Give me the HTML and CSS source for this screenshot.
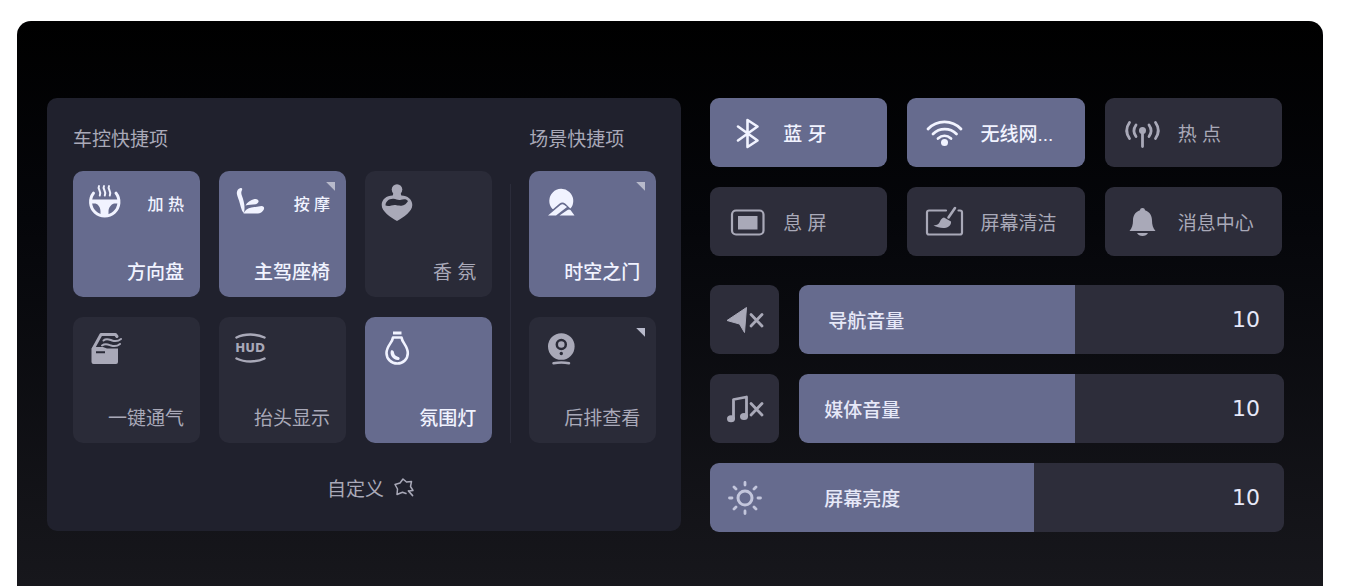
FILE: index.html
```
<!DOCTYPE html>
<html lang="zh-CN">
<head>
    <meta charset="UTF-8">
    <title>控制中心</title>
    <link rel="stylesheet" href="styles.css">
</head>
<body>
<div class="screen">
    <div class="panel">
        <div class="groups">
            <section class="group car">
                <h2>车控快捷项</h2>
                <div class="cards">
                    <button class="card active">
                        <span class="top">
                            <svg class="icon" viewBox="0 0 36 36">
                                <path class="line" stroke-width="3" d="M6.5 8.2A14.2 14.2 0 1 0 29 8.2"/>
                                <path d="M4 14.5h27.500v4h-4.500c-3 1-5.500 4-5.500 8v4h-8v-4c0-4-2-7-5-8H4z"/>
                                <path class="line" stroke-width="2" d="M12 1c-2 3 3 5 .8 9.500M17 1c-2 3 3 5 .8 9.500M22 1c-2 3 3 5 .8 9.500"/>
                            </svg>
                            <span class="sub">加 热</span>
                        </span>
                        <span class="name">方向盘</span>
                    </button>
                    <button class="card active">
                        <span class="top">
                            <svg class="icon" viewBox="0 0 36 36">
                                <path d="M7.500 3c1.500-.5 2.200.8 1.500 2-1 2-1 3.500 0 6 1.200 3 2.500 8 2.500 11 0 2.500 0 4.500-1 6C8 25 7.500 20 6 15.500 4.500 11 3.200 8.500 4.200 6 5 4 6 3.500 7.500 3z"/>
                                <path d="M12.500 20.500c1.500-3 5-5.500 9-6.500 3.500-.8 5.500 2.500 3 4.200l-1.500 1c-4 .3-7.500.5-10.500 1.300z"/>
                                <path d="M10.500 28.500c1.500-3.500 4-5.500 8-6l10-1.500c3 0 3.300 2.800 1.500 4.800-1.500 1.800-3 2.500-5 2.700z"/>
                            </svg>
                            <span class="sub">按 摩</span>
                        </span>
                        <span class="name">主驾座椅</span>
                        <i class="corner"></i>
                    </button>
                    <button class="card">
                        <span class="top">
                            <svg class="icon" viewBox="0 0 36 36">
                                <circle cx="18" cy="4.500" r="5.300"/>
                                <path d="M14.500 7.500h7l1 4h-9z"/>
                                <path fill-rule="evenodd" d="M13.500 10.500h9c6 0 10.800 4 10.800 9.500 0 6.500-8.500 12-15.300 16C11.200 32 2.700 26.500 2.700 20c0-5.500 4.800-9.500 10.800-9.500zM6.500 20.500c3.500 1.500 7-1 10-.5s9 2.500 12.500-4c-2-2.500-5-1.800-7-1.300-3 .8-4.500-.7-7.500-.9-4.500-.3-8 2.700-8 6.700z"/>
                            </svg>
                        </span>
                        <span class="name">香 氛</span>
                    </button>
                    <button class="card">
                        <span class="top">
                            <svg class="icon" viewBox="0 0 36 36">
                                <path class="line" stroke-width="3" stroke-linejoin="round" d="M6.300 17.500L14 3.500h14.500l1.500 2"/>
                                <path fill-rule="evenodd" d="M6 16h10l4 1.500h11V31a2 2 0 0 1-2 2H6.500a2 2 0 0 1-2-2V17.500zM9 20.300v2h9v-2z"/>
                                <path class="line" stroke-width="2" d="M16.500 9.500c3-2.500 5.500-1 8.500 0s6 1 9-1.500M15 14.500c3.500-2.500 6-1 9 0s6 1 9-1.500"/>
                            </svg>
                        </span>
                        <span class="name">一键通气</span>
                    </button>
                    <button class="card">
                        <span class="top">
                            <svg class="icon" viewBox="0 0 36 36">
                                <path class="line" stroke-width="2.500" d="M3.500 6.500c8-4 20-4 28 0M3.500 27.500c8 4 20 4 28 0"/>
                                <text class="hud" x="17" y="21" text-anchor="middle">HUD</text>
                            </svg>
                        </span>
                        <span class="name">抬头显示</span>
                    </button>
                    <button class="card active">
                        <span class="top">
                            <svg class="icon" viewBox="0 0 36 36">
                                <path d="M14 .5h8.500v3H14z"/>
                                <path class="line" stroke-width="2.600" stroke-linejoin="round" d="M14 6.500h8.500c.5 5 6.300 8.500 6.300 15.500 0 6-4.500 10.500-10.500 10.500S7.500 28 7.500 22C7.500 15 13.500 11.500 14 6.500z"/>
                                <path d="M12 19.500c1.500-1 3 .2 3 2 .3 2.500 2 3.800 4.300 4.500 2.200.8 1.500 3-.5 3-5 0-8.500-5.500-6.800-9.500z"/>
                            </svg>
                        </span>
                        <span class="name">氛围灯</span>
                    </button>
                </div>
            </section>
            <section class="group scene">
                <h2>场景快捷项</h2>
                <div class="cards">
                    <button class="card active">
                        <span class="top">
                            <svg class="icon" viewBox="0 0 36 36">
                                <path d="M9.500 24a12 12 0 1 1 18-.5z"/>
                                <path class="hill" d="M3 31.500L17 19.500c1.800-1.500 3-1.500 4.800 0L34 31.500z"/>
                                <path d="M5 30.500L17.500 20c1.500-1.200 2.500-1 3.800 0l2.700 2L13 30.500z"/>
                                <path d="M16.500 30.500l8-5.500c1-.8 2-.8 3 0l4 5.500z"/>
                            </svg>
                        </span>
                        <span class="name">时空之门</span>
                        <i class="corner"></i>
                    </button>
                    <button class="card">
                        <span class="top">
                            <svg class="icon" viewBox="0 0 36 36">
                                <circle cx="18.300" cy="15.500" r="13.300"/>
                                <circle class="hole" cx="18.300" cy="13.500" r="4.500"/>
                                <circle class="dot" cx="18.300" cy="22.500" r="1.700"/>
                                <path class="line" stroke-width="2.500" d="M10.500 32.300q8-1.500 15.500 0"/>
                            </svg>
                        </span>
                        <span class="name">后排查看</span>
                        <i class="corner"></i>
                    </button>
                </div>
            </section>
        </div>
        <button class="custom">自定义
            <svg class="star" viewBox="0 0 20 20">
                <path class="line" stroke-width="1.500" stroke-linejoin="round" d="M12 16.500l-3.500-1.300L3 17.500l.5-5.500L1 7.500 6 6l3-4 3.500 3 5-.5-1 5 2.500 4-4 .5"/>
                <path class="line" stroke-width="1.800" d="M14.500 14l4 4.500"/>
            </svg>
        </button>
    </div>

    <div class="side">
        <div class="tiles">
            <button class="tile active">
                <svg viewBox="0 0 38 38">
                    <path class="line" stroke-width="2.600" stroke-linejoin="round" d="M9 12.500l19.500 14L18.500 33V6l10 6.500L9 26.500"/>
                </svg>
                蓝 牙
            </button>
            <button class="tile active">
                <svg viewBox="0 0 38 38">
                    <path class="line" stroke-width="2.800" d="M2 15c9-9.500 24-9.500 33 0M7 20c6.500-6.500 17-6.500 23.500 0M12 24.500c4-3.500 9-3.500 13 0"/>
                    <circle cx="18.500" cy="28.500" r="3.500"/>
                </svg>
                无线网...
            </button>
            <button class="tile">
                <svg viewBox="0 0 38 38">
                    <path class="line" stroke-width="2.800" d="M5.500 8.500c-3.500 5-3.500 11 0 16M12 11c-2.500 3.500-2.500 8 0 11.500M31.500 8.500c3.500 5 3.500 11 0 16M25 11c2.500 3.500 2.500 8 0 11.500M18.500 17v15.500"/>
                    <circle cx="18.500" cy="16.500" r="3.500"/>
                </svg>
                热 点
            </button>
            <button class="tile">
                <svg viewBox="0 0 38 38">
                    <rect class="line" stroke-width="2.200" x="3" y="7.500" width="31.500" height="24" rx="4"/>
                    <path d="M9 13h19.500v13.500H9z"/>
                </svg>
                息 屏
            </button>
            <button class="tile">
                <svg viewBox="0 0 38 38">
                    <path class="line" stroke-width="2.200" d="M20 7.500H3a2 2 0 0 0-2 2V29.500a2 2 0 0 0 2 2h31a2 2 0 0 0 2-2V9.500a2 2 0 0 0-2-2h-1.500"/>
                    <path class="line" stroke-width="2.600" d="M29 5l-6.500 9.500"/>
                    <path d="M18 14.500l7 4c.5 3-2 6-6.500 6.500-4 .3-7.500-1-11-2.500 4-.5 5.500-1.500 6.500-4 .8-2 2-3.500 4-4z"/>
                </svg>
                屏幕清洁
            </button>
            <button class="tile">
                <svg viewBox="0 0 38 38">
                    <path d="M18.500 5c1.500 0 2.300.8 2.500 2.200 5 1.800 7 5.500 7 10.300 0 4.500 1 7.500 3.500 10.500H5.500C8 25 9 22 9 17.500 9 12.700 11 9 16 7.200 16.200 5.800 17 5 18.500 5zM13 30h11c-1 2-3 3-5.500 3S14 32 13 30z"/>
                </svg>
                消息中心
            </button>
        </div>

        <div class="sliders">
            <div class="row">
                <button class="mute" aria-label="导航静音">
                    <svg viewBox="0 0 38 38">
                        <path stroke="currentColor" stroke-linejoin="round" d="M1 19.500L20.500 6.500 18.500 31.500l-5-8.500z"/>
                        <path class="line" stroke-width="2.800" d="M25 13.500l11 11.500M36 13.500L25 25"/>
                    </svg>
                </button>
                <div class="slider nav">
                    <input type="range" id="nav" min="0" max="18" value="10" style="--fill: 57%">
                    <label for="nav">导航音量</label>
                    <output for="nav">10</output>
                </div>
            </div>
            <div class="row">
                <button class="mute" aria-label="媒体静音">
                    <svg viewBox="0 0 38 38">
                        <path class="line" stroke-width="2.800" stroke-linejoin="round" d="M7.500 28.500V9.500L20.500 7v19"/>
                        <ellipse cx="5" cy="28.800" rx="4" ry="3.500"/>
                        <ellipse cx="18" cy="26.500" rx="4" ry="3.500"/>
                        <path class="line" stroke-width="2.800" d="M25 13.500l11 11.500M36 13.500L25 25"/>
                    </svg>
                </button>
                <div class="slider">
                    <input type="range" id="media" min="0" max="18" value="10" style="--fill: 57%">
                    <label for="media">媒体音量</label>
                    <output for="media">10</output>
                </div>
            </div>
            <div class="row">
                <div class="slider light">
                    <input type="range" id="light" min="0" max="18" value="10" style="--fill: 56.400%">
                    <label for="light">
                        <svg viewBox="0 0 38 38">
                            <circle class="line" stroke-width="3" cx="19" cy="19" r="7"/>
                            <path class="line" stroke-width="2.800" d="M19 3.500v2.500M19 32v2.500M3.500 19H6M32 19h2.500M8 8l2 2M28 28l2 2M8 30l2-2M28 10l2-2"/>
                        </svg>
                        屏幕亮度
                    </label>
                    <output for="light">10</output>
                </div>
            </div>
        </div>
    </div>
</div>
</body>
</html>
```

FILE: styles.css
```
*{
    margin: 0;
    padding: 0;
    box-sizing: border-box;
}
body{
    background-color: #fff;
    padding: 21px 25px 0 17px;
    font-family: "Liberation Sans", "Noto Sans CJK SC", sans-serif;
    font-size: 19px;
    color: #a9a9b8;
}
button{
    border: none;
    font: inherit;
    color: inherit;
    background: none;
    cursor: pointer;
}
svg{
    fill: currentColor;
    flex: none;
    overflow: visible;
}
.line{
    fill: none;
    stroke: currentColor;
    stroke-linecap: round;
}
.screen{
    min-height: calc(100vh - 21px);
    padding: 77px 39px 54px 30px;
    border-radius: 14px 14px 0 0;
    background: linear-gradient(#000, #05060a 35%, #17171c);
    display: grid;
    grid-template-columns: 21fr 19fr;
    gap: 29px;
    align-items: start;
}

/* 左侧快捷项 */
.panel{
    padding: 26px 25px 24px 26px;
    border-radius: 10px;
    background-color: #20212d;
}
.groups{
    display: flex;
}
.group h2{
    font-size: 19px;
    font-weight: 400;
    line-height: 32px;
    margin-bottom: 15px;
}
.car{
    flex: 1;
}
.scene{
    width: 164px;
    padding-left: 37px;
    background: linear-gradient(#2b2c3a, #2b2c3a) 18px 60px / 1px 100% no-repeat;
}
.cards{
    display: grid;
    grid-template-columns: repeat(3, 1fr);
    gap: 20px 19px;
}
.scene .cards{
    grid-template-columns: 1fr;
}
.card{
    height: 126px;
    padding: 14px 16px 10px 14px;
    border-radius: 10px;
    background-color: #2a2b38;
    display: flex;
    flex-direction: column;
    justify-content: space-between;
    position: relative;
}
.active{
    background-color: #666b8e;
    color: #f1f3ff;
    font-weight: 500;
}
.top{
    display: flex;
    justify-content: space-between;
    align-items: center;
}
.icon{
    width: 36px;
    height: 36px;
}
.sub{
    font-size: 16px;
}
.name{
    line-height: 28px;
    text-align: right;
}
.corner{
    position: absolute;
    top: 11px;
    right: 11px;
    width: 9px;
    height: 9px;
    background-color: #b8bacb;
    clip-path: polygon(0 0, 100% 0, 100% 100%);
}
.hud{
    font: bold 12px "DejaVu Sans", sans-serif;
}
.hill{
    fill: #666b8e;
    stroke: #666b8e;
    stroke-width: 2;
}
.hole{
    fill: none;
    stroke: #2a2b38;
    stroke-width: 2.5;
}
.dot{
    fill: #2a2b38;
}
.custom{
    display: flex;
    align-items: center;
    gap: 10px;
    height: 40px;
    margin: 24px auto 0;
    padding-left: 12px;
}
.star{
    width: 20px;
    height: 20px;
}

/* 右侧开关 */
.tiles{
    display: grid;
    grid-template-columns: repeat(3, 1fr);
    gap: 20px;
    margin: 0 2px 29px 0;
}
.tile{
    height: 69px;
    padding-left: 19px;
    border-radius: 9px;
    background-color: #2d2d3a;
    display: flex;
    align-items: center;
    gap: 16px;
    white-space: nowrap;
}
.tile.active{
    background-color: #666b8e;
}
.tile svg,.mute svg,.slider svg{
    width: 38px;
    height: 38px;
}

/* 滑动条 */
.sliders{
    display: grid;
    gap: 20px;
}
.row{
    display: flex;
    gap: 20px;
}
.mute{
    width: 69px;
    height: 69px;
    border-radius: 9px;
    background-color: #2d2d3a;
    display: flex;
    align-items: center;
    justify-content: center;
}
.slider{
    flex: 1;
    height: 69px;
    display: grid;
    align-items: center;
    color: #e6e8f8;
    font-weight: 500;
}
.slider input,.slider label,.slider output{
    grid-area: 1 / 1;
}
.slider input{
    appearance: none;
    width: 100%;
    height: 69px;
    border-radius: 9px;
    background: linear-gradient(to right, #666b8e var(--fill), #2d2d3a var(--fill));
}
.slider input::-webkit-slider-thumb{
    appearance: none;
    width: 20px;
    height: 69px;
    background: transparent;
}
.slider label{
    display: flex;
    align-items: center;
    gap: 60px;
    padding-left: 25px;
    pointer-events: none;
}
.slider.nav label{
    padding-left: 29px;
}
.slider.light label{
    padding-left: 16px;
}
.slider svg{
    color: #c3c6dc;
}
.slider output{
    justify-self: end;
    padding-right: 24px;
    font: 22px "DejaVu Sans", sans-serif;
    pointer-events: none;
}
```
